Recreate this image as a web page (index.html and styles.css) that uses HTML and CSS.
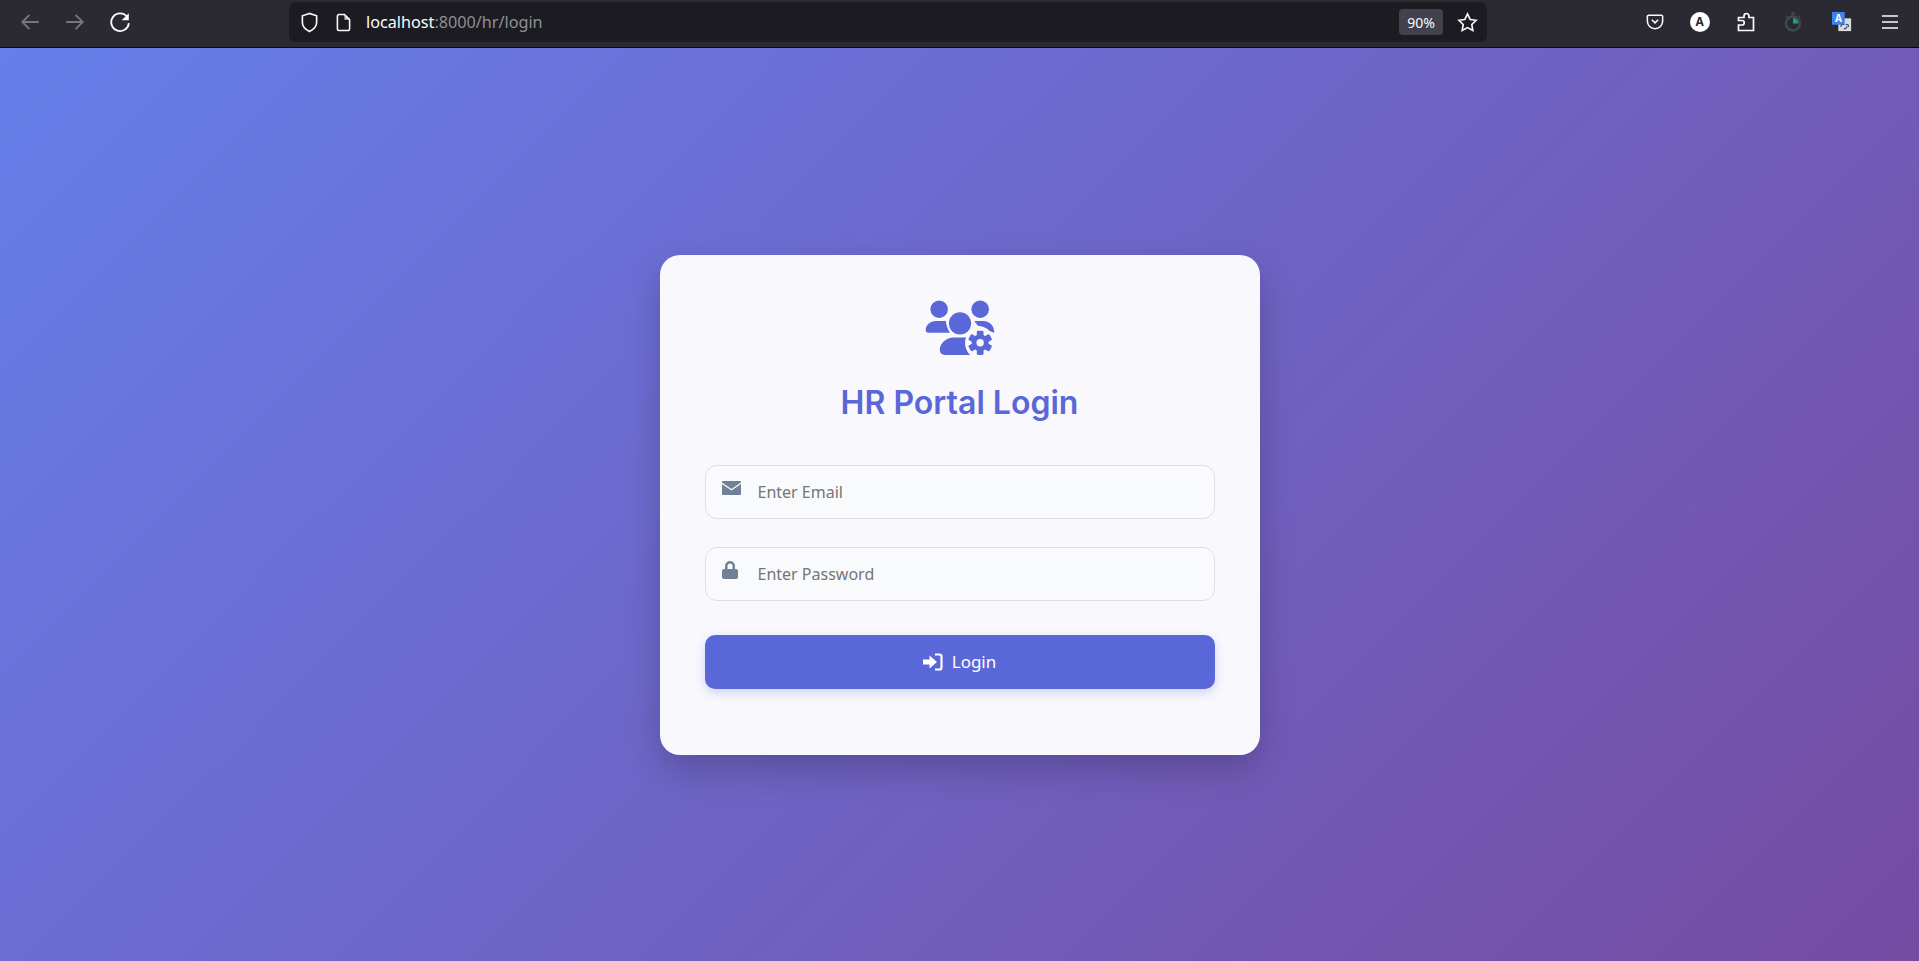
FILE: index.html
```html
<!DOCTYPE html>
<html lang="en">
<head>
<meta charset="utf-8">
<title>HR Portal Login</title>
<link rel="stylesheet" href="styles.css">
</head>
<body>
<header class="toolbar">
  <nav class="nav">
    <span class="tool dim"><svg viewBox="0 0 20 20"><path d="M18 10H3M9.500 3.500 3 10l6.500 6.500"/></svg></span>
    <span class="tool dim"><svg viewBox="0 0 20 20"><path d="M2 10h15M10.500 3.500 17 10l-6.500 6.500"/></svg></span>
    <span class="tool"><svg viewBox="0 0 20 20"><path d="M16.500 5.500A8 8 0 1 0 18 11"/><path class="fill" d="M18 2v6.500h-6.500z"/></svg></span>
  </nav>
  <div class="urlbar">
    <svg class="shield" viewBox="0 0 20 22"><path d="M10 1.500 2.500 4v7c0 4.500 3.500 7.500 7.500 9.500 4-2 7.500-5 7.500-9.500V4z"/></svg>
    <svg class="page" viewBox="0 0 16 20"><path d="M3 1.500h6L14.500 7v10a1.500 1.500 0 0 1-1.500 1.500H3A1.500 1.500 0 0 1 1.500 17V3A1.500 1.500 0 0 1 3 1.500z"/><path class="fill" d="M9 1.500 14.500 7H9z"/></svg>
    <span class="url">localhost<span class="url-rest">:8000/hr/login</span></span>
    <span class="zoom-badge">90%</span>
    <svg class="star" viewBox="0 0 22 22"><path d="m11 2 2.800 5.800 6.200.9-4.500 4.400 1.100 6.300L11 16.400l-5.600 3 1.100-6.300L2 8.700l6.200-.9z"/></svg>
  </div>
  <div class="extensions">
    <span class="ext ext-a"><svg viewBox="0 0 20 20"><path d="M3 2.500h14A1.500 1.500 0 0 1 18.500 4v5a8.500 8.500 0 0 1-17 0V4A1.500 1.500 0 0 1 3 2.500z"/><path d="m6.500 7.500 3.500 3.500 3.500-3.500"/></svg></span>
    <span class="ext ext-b"><span class="account">A</span></span>
    <span class="ext ext-c"><svg viewBox="0 0 20 20"><path d="M2.500 18.500V13H6a2 2 0 0 0 0-4.500H2.500V5.500H8V4a2.500 2.500 0 0 1 5 0v1.500h4.500v13z"/></svg></span>
    <span class="ext ext-d"><svg viewBox="0 0 20 20"><circle class="ring" cx="10" cy="11.500" r="7"/><path class="teal" d="M10 6v5.500l5.500 0A5.500 5.500 0 0 0 10 6z"/><path class="ring-top" d="M8 1.500h4M3.500 4l1 1M16.500 4l-1 1"/></svg></span>
    <span class="ext ext-e"><svg viewBox="0 0 22 22"><rect class="doc" x="7" y="7" width="14" height="14"/><rect class="blue" x="0" y="0" width="14" height="14"/><path class="link" d="M10 16.500a2 2 0 0 1 3-2.500M13 18a2 2 0 0 0 3-2.500M15 14a2 2 0 0 1 3 2.500"/><text class="a-letter" x="7" y="11.500">A</text></svg></span>
    <span class="ext ext-f"><svg viewBox="0 0 20 20"><path d="M2 4h16M2 10h16M2 16h16"/></svg></span>
  </div>
</header>
<main class="stage">
  <section class="card">
    <svg class="logo" viewBox="370 85 220 175" aria-hidden="true">
      <circle cx="418" cy="118" r="26"/>
      <path d="M378 180c0-15 14-27 30-27h30c1 13 6 25 12 35h-64q-8 0-8-8z"/>
      <circle cx="540" cy="118" r="26"/>
      <path d="M522 153h28c18 0 32 15 32 35l-14-5c-10-12-26-15-34-15-4-5-8-10-12-15z"/>
      <circle cx="480" cy="160" r="33"/>
      <path d="M420 238c0-19 20-36 40-36h38c-5 18-3 36 12 52h-74q-16 0-16-16z"/>
      <circle class="gear-cut" cx="540" cy="218" r="44"/>
      <g>
        <circle cx="540" cy="218" r="25"/>
        <rect x="530" y="182" width="20" height="72" rx="4"/>
        <rect x="530" y="182" width="20" height="72" rx="4" transform="rotate(60 540 218)"/>
        <rect x="530" y="182" width="20" height="72" rx="4" transform="rotate(120 540 218)"/>
      </g>
      <circle class="gear-cut" cx="540" cy="218" r="11"/>
    </svg>
    <h1 class="title">HR Portal Login</h1>
    <form class="form">
      <label class="field">
        <svg class="field-icon mail" viewBox="0 0 19 14"><path d="M1 0h17a1 1 0 0 1 1 1v.6L9.500 8 0 1.600V1a1 1 0 0 1 1-1z"/><path d="M0 3l9.500 6.400L19 3v10a1 1 0 0 1-1 1H1a1 1 0 0 1-1-1z"/></svg>
        <input class="input" type="email" placeholder="Enter Email">
      </label>
      <label class="field">
        <svg class="field-icon lock" viewBox="0 0 16 18"><path d="M3 8V5a5 5 0 0 1 10 0v3h1a2 2 0 0 1 2 2v6a2 2 0 0 1-2 2H2a2 2 0 0 1-2-2v-6a2 2 0 0 1 2-2zm2.500 0h5V5a2.500 2.500 0 0 0-5 0z"/></svg>
        <input class="input" type="password" placeholder="Enter Password">
      </label>
      <button class="submit" type="button">
        <svg class="submit-icon" viewBox="0 0 20 18"><path class="arrow" d="M0 6.500h6.500V2.500L14 9l-7.500 6.500v-4H0z"/><path class="bracket" d="M12 1.500h4.500a2 2 0 0 1 2 2v11a2 2 0 0 1-2 2H12"/></svg>
        Login
      </button>
    </form>
  </section>
</main>
</body>
</html>
```
FILE: styles.css
```css
* { box-sizing: border-box; }
html, body { height: 100%; }
body {
  margin: 0;
  display: flex;
  flex-direction: column;
  overflow: hidden;
  font-family: "Noto Sans", "Open Sans", sans-serif;
}

.toolbar {
  flex: 0 0 48px;
  display: flex;
  align-items: center;
  padding-bottom: 3px;
  background: #2b2a33;
  border-bottom: 1px solid #0b0b0f;
}
.toolbar svg { fill: none; stroke: #fbfbfe; stroke-width: 1.7; }
.toolbar .fill { fill: #fbfbfe; stroke: none; }

.nav { display: flex; padding-left: 7px; width: 289px; }
.tool { width: 45px; display: flex; justify-content: center; }
.tool svg { width: 22px; height: 22px; }
.tool.dim svg { stroke: #77767d; }

.urlbar {
  width: 1198px;
  height: 40px;
  display: flex;
  align-items: center;
  background: #1c1b22;
  border-radius: 6px;
  padding: 0 7px 0 11px;
}
.shield { width: 19px; height: 21px; }
.page { width: 15px; height: 19px; margin-left: 17px; }
.page .fill { opacity: .75; }
.url {
  margin-left: 15px;
  flex: 1;
  color: #fbfbfe;
  font-size: 16.200px;
  font-weight: 400;
}
.url-rest { color: #8f8f94; }
.zoom-badge {
  width: 44px;
  height: 26px;
  border-radius: 4px;
  background: #42414d;
  color: #fbfbfe;
  font-size: 14px;
  display: flex;
  align-items: center;
  justify-content: center;
}
.star { width: 21px; height: 21px; margin: 0 2px 0 14px; }

.extensions { display: flex; margin-left: auto; padding-right: 6px; }
.ext { display: flex; justify-content: center; align-items: center; height: 22px; }
.ext svg { width: 20px; height: 20px; }
.ext-a { width: 45px; }
.ext-b { width: 45.500px; }
.ext-c { width: 46.500px; }
.ext-d { width: 48.500px; }
.ext-e { width: 48.500px; }
.ext-f { width: 47px; }
.ext-a svg { width: 18px; height: 18px; }
.account {
  width: 20px;
  height: 20px;
  border-radius: 50%;
  background: #fff;
  color: #2b2a33;
  font: 700 12px/20px "Noto Sans", sans-serif;
  text-align: center;
}
.toolbar .ext-d svg { stroke: #3f4a4a; stroke-width: 2.400; }
.toolbar .ext-d .teal { fill: #1f9c86; stroke: none; }
.toolbar .ext-e svg { stroke: none; width: 20px; height: 20px; }
.toolbar .ext-e .doc { fill: #d9dde3; }
.toolbar .ext-e .blue { fill: #3d82f0; }
.toolbar .ext-e .link { stroke: #4a5560; stroke-width: 1.400; }
.toolbar .ext-e .a-letter {
  fill: #fff;
  stroke: none;
  font: 700 11px "Noto Sans", sans-serif;
  text-anchor: middle;
}

.stage {
  flex: 1;
  display: flex;
  align-items: center;
  justify-content: center;
  background: linear-gradient(135deg, #667eea 0%, #764ba2 100%);
}

.card {
  width: 600px;
  height: 500px;
  padding: 43px 45px 0;
  display: flex;
  flex-direction: column;
  align-items: center;
  background: #f8f8fd;
  border-radius: 20px;
  box-shadow: 0 15px 35px rgba(0, 0, 0, .2);
}
.logo { width: 74px; height: 59px; fill: #5a67d8; flex: none; margin-left: 1px; }
.logo .gear-cut { fill: #f8f8fd; }

.title {
  margin: 28px 0 44px;
  color: #5a67d8;
  font: 600 32px/36px "Inter", "Lato", sans-serif;
  white-space: nowrap;
}

.form { width: 100%; display: flex; flex-direction: column; }
.field { position: relative; display: block; margin-bottom: 28px; }
.field-icon { position: absolute; left: 17px; fill: #718096; }
.mail { top: 16px; width: 19px; height: 14px; }
.lock { top: 14px; width: 16px; height: 18px; }
.input {
  display: block;
  width: 100%;
  height: 54px;
  padding: 0 16px 0 52px;
  border: 1.500px solid #e0e0e4;
  border-radius: 12px;
  background: #f9fafc;
  font: 16px "Noto Sans", sans-serif;
  color: #333;
  outline: none;
}
.input::placeholder { color: #757575; opacity: 1; }

.submit {
  margin-top: 6px;
  height: 54px;
  display: flex;
  align-items: center;
  justify-content: center;
  gap: 9px;
  border: 0;
  border-radius: 10px;
  background: #5a67d8;
  color: #fff;
  font: 400 17px "Noto Sans", sans-serif;
  box-shadow: 0 4px 10px rgba(90, 103, 216, .25);
}
.submit-icon { width: 20px; height: 18px; fill: none; }
.submit-icon .arrow { fill: #fff; }
.submit-icon .bracket { stroke: #fff; stroke-width: 2.200; }
```
